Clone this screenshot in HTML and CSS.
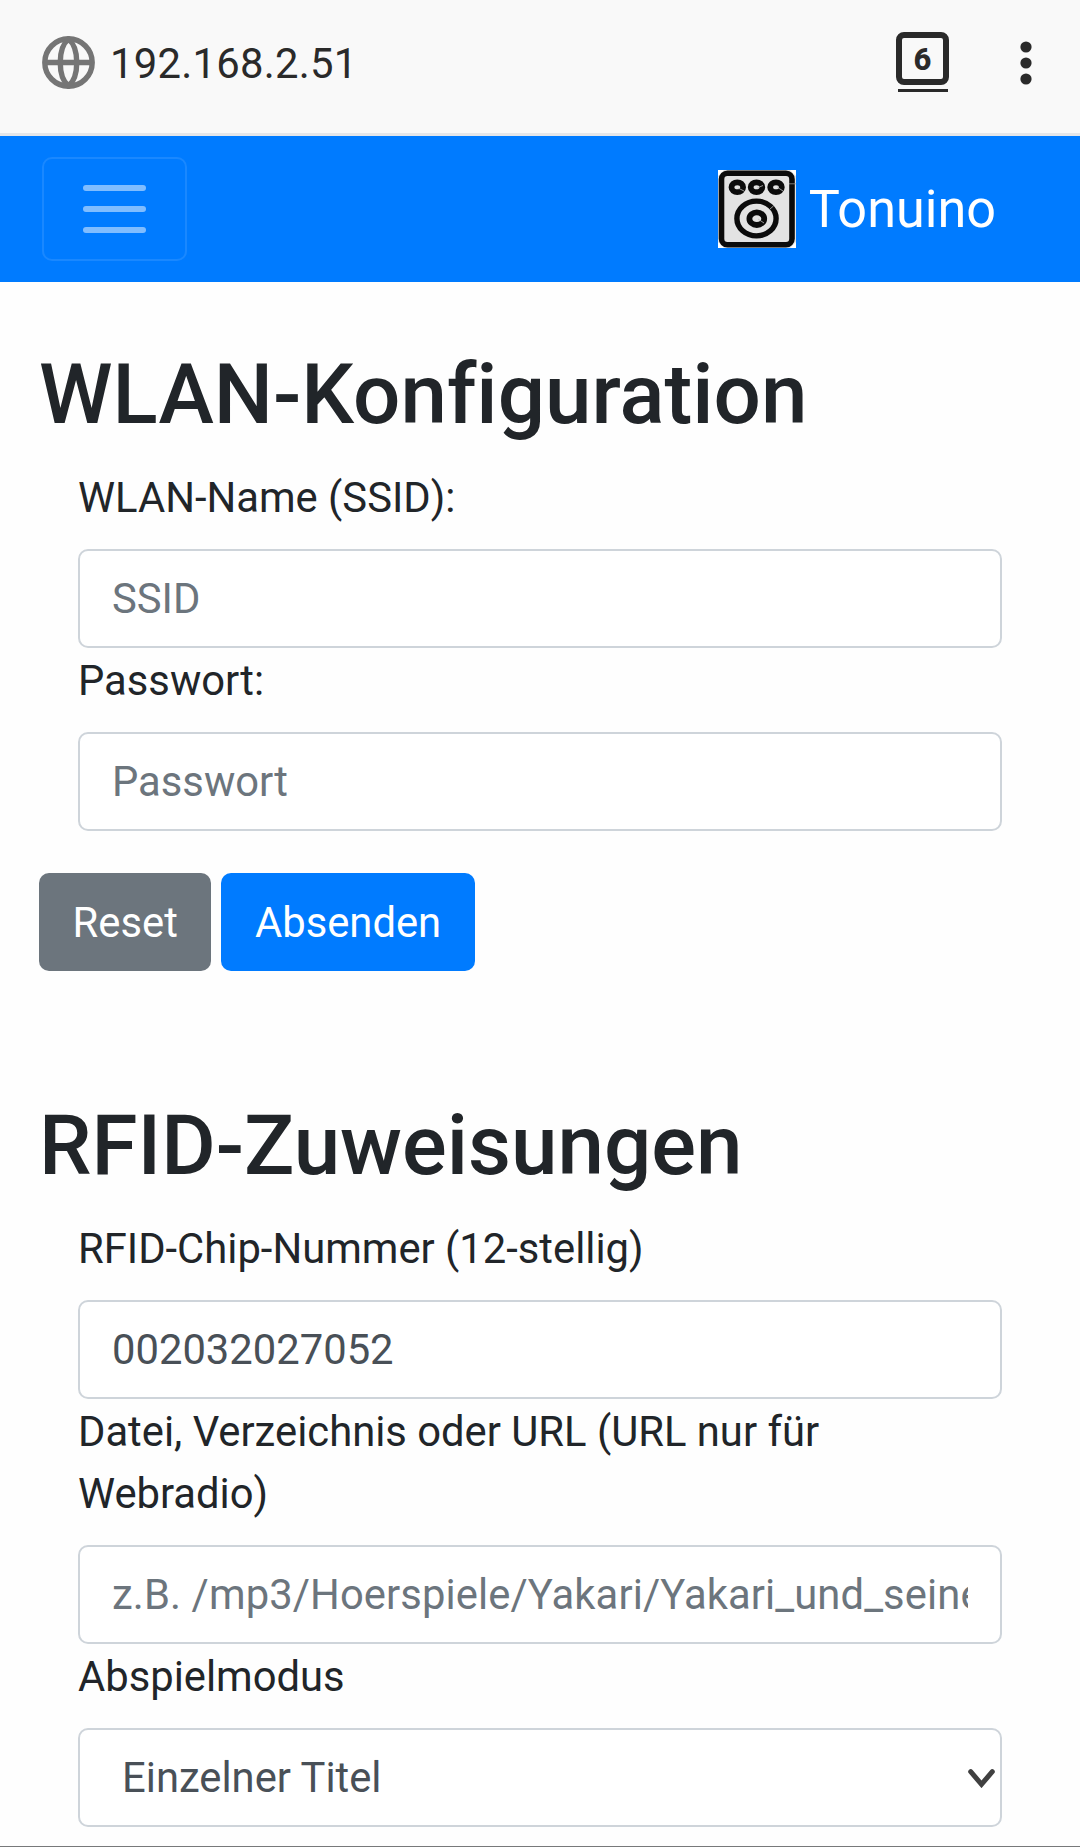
FILE: index.html
```html
<!DOCTYPE html>
<html lang="de">
<head>
<meta charset="utf-8">
<title>Tonuino</title>
<link rel="stylesheet" href="styles.css">
</head>
<body>
<header class="browser-bar">
  <svg class="globe" viewBox="0 0 53 53" fill="none" stroke="#757575" stroke-width="5.4">
    <circle cx="26.5" cy="26.5" r="23.7"/>
    <path d="M3 26.5H50"/>
    <path d="M26.5 3C15.500 12 15.500 41 26.500 50C37.500 41 37.500 12 26.500 3Z"/>
  </svg>
  <span class="address">192.168.2.51</span>
  <div class="tabs"><span class="tab-count">6</span></div>
  <svg class="dots" viewBox="0 0 12 44" fill="#2a2a2a">
    <circle cx="6" cy="6" r="5.6"/><circle cx="6" cy="22" r="5.6"/><circle cx="6" cy="38" r="5.6"/>
  </svg>
</header>
<nav class="navbar">
  <button class="toggler" type="button" aria-label="Navigation">
    <span class="line"></span><span class="line"></span><span class="line"></span>
  </button>
  <a class="brand">
    <svg class="logo" viewBox="0 0 78 78" fill="none" stroke="#0b0b0b">
      <rect width="78" height="78" fill="#e3e3e3" stroke="none"/>
      <path d="M0 0H6L0 6ZM72 0H78V6ZM0 72V78H6ZM78 72V78H72Z" fill="#fff" stroke="none"/>
      <rect x="3.500" y="3.200" width="70.500" height="71.500" rx="6" stroke-width="5.600"/>
      <ellipse cx="19.300" cy="17.300" rx="5.800" ry="4.900" stroke-width="5.800"/>
      <ellipse cx="38.500" cy="17.300" rx="5.800" ry="4.900" stroke-width="5.800"/>
      <ellipse cx="58" cy="17.300" rx="5.800" ry="4.900" stroke-width="5.800"/>
      <ellipse cx="38.500" cy="48.500" rx="19.600" ry="17.400" stroke-width="5.400"/>
      <ellipse cx="38.800" cy="48.700" rx="7.400" ry="6.300" stroke-width="5.800"/>
      <path d="M20 18L26 21M39 18L45 15.500M59 17L65 21M40 49L46 53M52 39L55.500 36" stroke="#bbb" stroke-width=".8"/>
      <path d="M71 13.800H78" stroke="#999" stroke-width=".8"/>
    </svg>
    <span class="brand-name">Tonuino</span>
  </a>
</nav>
<main class="container">
  <section class="section">
    <h2 class="title">WLAN-Konfiguration</h2>
    <form>
      <div class="fields">
        <label class="label" for="ssid">WLAN-Name (SSID):</label>
        <input class="control" id="ssid" type="text" placeholder="SSID">
        <label class="label" for="pwd">Passwort:</label>
        <input class="control" id="pwd" type="text" placeholder="Passwort">
      </div>
      <div class="actions">
        <button class="btn btn-secondary" type="reset">Reset</button>
        <button class="btn btn-primary" type="button">Absenden</button>
      </div>
    </form>
  </section>
  <section class="section">
    <h2 class="title">RFID-Zuweisungen</h2>
    <form class="fields">
      <label class="label" for="rfid">RFID-Chip-Nummer (12-stellig)</label>
      <input class="control" id="rfid" type="text" value="002032027052">
      <label class="label" for="url">Datei, Verzeichnis oder URL (URL nur für Webradio)</label>
      <input class="control control-path" id="url" type="text" placeholder="z.B. /mp3/Hoerspiele/Yakari/Yakari_und_seine_Freunde">
      <label class="label" for="mode">Abspielmodus</label>
      <div class="select-wrap">
        <select class="control select" id="mode"><option>Einzelner Titel</option></select>
        <svg class="chevron" viewBox="0 0 27 19" fill="none" stroke="#404040" stroke-width="5" stroke-linecap="round">
          <path d="M2.700 2.700L13.500 15.300L24.300 2.700"/>
        </svg>
      </div>
    </form>
  </section>
</main>
</body>
</html>
```
FILE: styles.css
```css
* { box-sizing: border-box; }

html, body { height: 1847px; }

body {
  margin: 0;
  overflow: hidden;
  display: flex;
  flex-direction: column;
  background: #fefefe;
  border-bottom: 1px solid #77787a;
  color: #212529;
  font: 400 41.75px/62.4px Roboto, sans-serif;
}

.browser-bar {
  flex: none;
  height: 136px;
  padding: 0 48px 8px 42px;
  display: flex;
  align-items: center;
  background: #f9f9f9;
  border-bottom: 3px solid #e4e6e9;
}

.globe { width: 53px; height: 53px; }

.address {
  margin-left: 15px;
  padding-top: 3px;
  color: #2a2a2a;
  font-size: 41.800px;
  letter-spacing: 0.25px;
}

.tabs {
  position: relative;
  margin: -8px 71px 0 auto;
  width: 53px;
  height: 53px;
  display: flex;
  align-items: center;
  justify-content: center;
  border: 6px solid #2a2a2a;
  border-radius: 8px;
}

.tabs::after {
  content: "";
  position: absolute;
  left: -4.500px;
  right: -4.500px;
  bottom: -13px;
  height: 3px;
  background: #2a2a2a;
}

.tab-count {
  padding-top: 2px;
  color: #2a2a2a;
  font-size: 31px;
  line-height: 41px;
  font-weight: 800;
}

.dots { width: 12px; height: 44px; }

.navbar {
  flex: none;
  height: 146px;
  padding: 0 84px 0 42px;
  display: flex;
  align-items: center;
  justify-content: space-between;
  background: #007bff;
}

.toggler {
  width: 145px;
  height: 104px;
  padding: 0;
  display: flex;
  flex-direction: column;
  align-items: center;
  justify-content: center;
  gap: 15px;
  background: transparent;
  border: 2px solid rgba(255, 255, 255, 0.1);
  border-radius: 10px;
}

.line {
  width: 63px;
  height: 6px;
  border-radius: 3px;
  background: #80bdff;
}

.brand {
  display: flex;
  align-items: center;
  gap: 13px;
  color: #fff;
  font-size: 52.2px;
}

.brand-name { padding-top: 2px; }

.logo { width: 78px; height: 78px; }

.container { padding: 0 39px; }

.section { padding-top: 63px; }
.section + .section { padding-top: 125px; }

.title {
  margin: 0 0 20px;
  font-size: 83.500px;
  line-height: 100px;
  font-weight: 500;
  font-variant-ligatures: none;
}

.fields { padding: 0 39px; }

.label {
  display: block;
  padding: 1.600px 0 20px;
}

.control {
  display: block;
  width: 924px;
  height: 99px;
  margin: 0;
  padding: 0 32px;
  background: #fff;
  border: 2px solid #ced4da;
  border-radius: 10px;
  color: #495057;
  font: inherit;
}

.control::placeholder { color: #6c757d; opacity: 1; }

.control-path { letter-spacing: 0.1px; }

.select-wrap { position: relative; }

.select { appearance: none; padding-left: 42px; }

.chevron {
  position: absolute;
  right: 7px;
  top: 41px;
  width: 27px;
  height: 19px;
}

.actions {
  display: flex;
  gap: 10px;
  margin-top: 42px;
}

.btn {
  height: 98px;
  padding: 2px 33.600px 0;
  border: 0;
  border-radius: 10px;
  color: #fff;
  font: inherit;
}

.btn-secondary { background: #6c757d; }
.btn-primary { background: #007bff; }
```
